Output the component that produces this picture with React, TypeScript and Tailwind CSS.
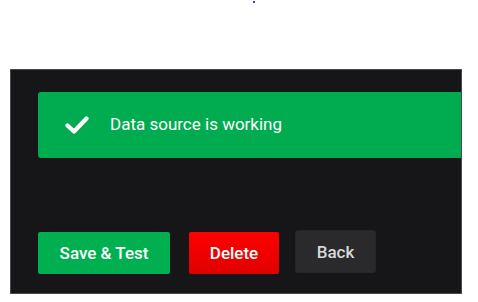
export default function App() {
  return (
    <div className="h-[302px] w-[478px] bg-white" style={{ fontFamily: "Roboto, 'Liberation Sans', sans-serif" }}>
      <div className="h-[69px] pt-px pl-[253px]">
        <div className="h-[2px] w-[2px] bg-[#3b3bf0]" />
      </div>
      <div className="ml-[10px] h-[225px] w-[452px] border border-[#4a4a4e] bg-[#161619] pt-[22px] pl-[27px]">
        <div className="flex h-[66px] items-center rounded-l-[3px] bg-[#00ac4f] pl-[27px]">
          <svg width="24" height="18" viewBox="0 0 24 18" className="mr-[21px] -mt-px">
            <path d="M2.5 9.5 L9 15.5 L21.5 2.5" fill="none" stroke="white" strokeWidth="4.2" strokeLinecap="round" strokeLinejoin="round" />
          </svg>
          <span className="text-[17px] text-white">Data source is working</span>
        </div>
        <div className="mt-[74px] flex items-start">
          <button className="h-[42px] w-[132px] rounded-[2px] bg-[#00b050] pt-[2px] text-[17px] font-medium text-white">
            Save &amp; Test
          </button>
          <button className="ml-[19px] h-[42px] w-[90px] rounded-[2px] bg-gradient-to-b from-[#ff0000] to-[#e00000] pt-[2px] text-[17px] font-medium text-white">
            Delete
          </button>
          <button className="ml-[16px] -mt-[2px] h-[43px] w-[81px] rounded-[3px] border border-[#262629] bg-[#2a2a2d] pt-[2px] text-[17px] font-medium text-[#d8d9da]">
            Back
          </button>
        </div>
      </div>
    </div>
  );
}
